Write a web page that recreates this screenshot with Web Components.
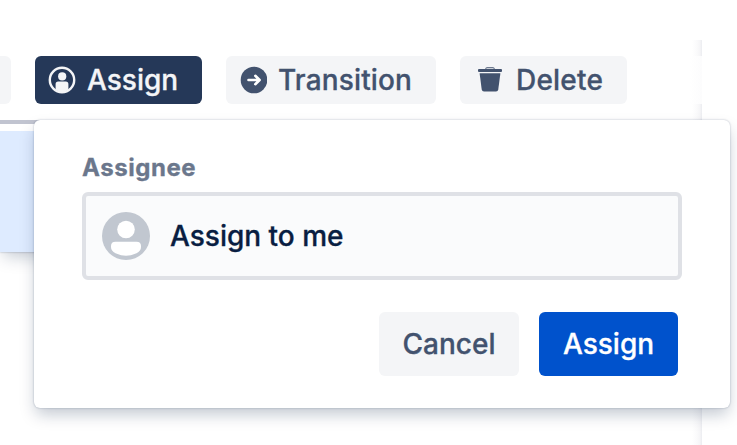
<!DOCTYPE html>
<html lang="en">
<head>
<meta charset="utf-8">
<title>Assign issues</title>
<style>
html, body {
  margin: 0;
  height: 100%;
  overflow: hidden;
  background: #fff;
  font-family: Inter, "Liberation Sans", sans-serif;
  -webkit-text-stroke-width: .3px;
}
</style>
</head>
<body>
<bulk-page>
  <bulk-toolbar slot="toolbar">
    <action-button></action-button>
    <action-button selected icon="person">Assign</action-button>
    <action-button icon="arrow" style="--width: 210px; --spacing: 0.15px">Transition</action-button>
    <action-button icon="trash" style="--spacing: 0.2px">Delete</action-button>
  </bulk-toolbar>
  <issue-row slot="row"></issue-row>
  <assign-popup slot="popup" heading="Assignee">
    <user-field>Assign to me</user-field>
    <form-button slot="footer">Cancel</form-button>
    <form-button slot="footer" primary>Assign</form-button>
  </assign-popup>
</bulk-page>

<script>
const ICONS = {
  person: `
<svg width="28" height="28" viewBox="0 0 28 28">
  <circle cx="14" cy="14" r="12.2" fill="none" stroke="currentColor" stroke-width="2.4"/>
  <circle cx="14.2" cy="10.4" r="4.1" fill="currentColor"/>
  <path d="M7.6 18.2a2.6 2.6 0 0 1 2.6-2.6h7.600a2.600 2.600 0 0 1 2.600 2.600v5.200q-2.800 2.600-6.400 2.600t-6.400-2.600z" fill="currentColor"/>
</svg>`,
  arrow: `
<svg width="28" height="28" viewBox="0 0 28 28">
  <circle cx="15" cy="14" r="13.3" fill="currentColor"/>
  <path d="M9.500 14h10.500M16.300 9.800l4.300 4.200-4.300 4.200" fill="none" stroke="#fff" stroke-width="2.6" stroke-linecap="round" stroke-linejoin="round"/>
</svg>`,
  trash: `
<svg width="28" height="28" viewBox="0 0 28 28">
  <path d="M9 2.800q.5-1.500 2-1.500h6q1.500 0 2 1.500z" fill="currentColor"/>
  <path d="M10.500 2.500h7" stroke="#f4f5f7" stroke-width=".7"/>
  <rect x="2" y="3" width="24" height="2.900" rx="1" fill="currentColor"/>
  <path d="M3.600 7.200h20.800l-2.100 16.100q-.3 2.200-2.300 2.200H8q-2 0-2.300-2.200z" fill="currentColor"/>
</svg>`
};

class BulkPage extends HTMLElement {
  constructor() {
    super();
    const shadowRoot = this.attachShadow({ mode: 'open' });
    shadowRoot.innerHTML = `
<style>
:host {
  display: block;
  position: relative;
  height: 445px;
  overflow: hidden;
}

.panel {
  width: 702px;
  height: 405px;
  margin-top: 40px;
  padding-top: 16px;
  box-sizing: border-box;
  background: linear-gradient(to left, #ebecf0 0, #f5f5f7 2px, #fafafb 5px, #fff 10px);
}

.popup {
  position: absolute;
  left: 34px;
  top: 120px;
}
</style>
<div style="display: flow-root">
  <div class="panel">
    <slot name="toolbar"></slot>
    <slot name="row"></slot>
  </div>
</div>
<div class="popup"><slot name="popup"></slot></div>
`;
  }
}

class BulkToolbar extends HTMLElement {
  constructor() {
    super();
    const shadowRoot = this.attachShadow({ mode: 'open' });
    shadowRoot.innerHTML = `
<style>
:host {
  display: flex;
  gap: 24px;
  height: 48px;
  margin-left: -156px;
  background: linear-gradient(to left, #fcfcfd, #fff 12px);
}
</style>
<slot></slot>
`;
  }
}

class ActionButton extends HTMLElement {
  constructor() {
    super();
    const shadowRoot = this.attachShadow({ mode: 'open' });
    shadowRoot.innerHTML = `
<style>
:host {
  display: flex;
  flex: none;
  align-items: center;
  gap: 11px;
  width: var(--width, 167px);
  height: 48px;
  padding-left: 13px;
  box-sizing: border-box;
  border-radius: 6px;
  background: #f4f5f7;
  color: #42526e;
  font-size: 28px;
  font-weight: 500;
  letter-spacing: var(--spacing, 0);
  white-space: nowrap;
}

:host([selected]) {
  background: #253858;
  color: #f4f5f7;
}

:host([icon="trash"]) {
  padding-left: 16px;
  gap: 12px;
}

svg {
  display: block;
}
</style>
${ICONS[this.getAttribute('icon')] || ''}
<span><slot></slot></span>
`;
  }
}

class IssueRow extends HTMLElement {
  constructor() {
    super();
    const shadowRoot = this.attachShadow({ mode: 'open' });
    shadowRoot.innerHTML = `
<style>
:host {
  display: block;
  width: 60px;
  padding-top: 16px;
}

.line {
  height: 4px;
  background: #c1c4d0;
}

.row {
  height: 121px;
  margin-top: 7px;
  background: #deebff;
  box-shadow: 0 0 2px rgba(9, 30, 66, .31), 0 8px 16px -4px rgba(9, 30, 66, .25);
  clip-path: inset(0 0 -30px 0);
}
</style>
<div class="line"></div>
<div class="row"></div>
`;
  }
}

class AssignPopup extends HTMLElement {
  constructor() {
    super();
    const shadowRoot = this.attachShadow({ mode: 'open' });
    shadowRoot.innerHTML = `
<style>
:host {
  display: flex;
  flex-direction: column;
  width: 696px;
  height: 288px;
  padding: 32px 48px;
  box-sizing: border-box;
  border-radius: 6px;
  background: #fff;
  box-shadow: 0 0 2px rgba(9, 30, 66, .31), 0 8px 16px -2px rgba(9, 30, 66, .25);
}

label {
  height: 32px;
  margin-bottom: 8px;
  color: #6b778c;
  font-size: 24px;
  font-weight: 700;
  line-height: 32px;
  letter-spacing: .55px;
}

footer {
  display: flex;
  justify-content: flex-end;
  gap: 20px;
  margin-top: 32px;
  padding-right: 4px;
}
</style>
<label></label>
<slot></slot>
<footer><slot name="footer"></slot></footer>
`;
    shadowRoot.querySelector('label').textContent = this.getAttribute('heading');
  }
}

class UserField extends HTMLElement {
  constructor() {
    super();
    const shadowRoot = this.attachShadow({ mode: 'open' });
    shadowRoot.innerHTML = `
<style>
:host {
  display: flex;
  align-items: center;
  gap: 20px;
  height: 88px;
  padding-left: 16px;
  box-sizing: border-box;
  border: 4px solid #dfe1e6;
  border-radius: 6px;
  background: #fafbfc;
  color: #091e42;
  font-size: 28px;
  font-weight: 500;
}

svg {
  display: block;
}

span {
  padding-bottom: 1px;
}
</style>
<svg width="48" height="48" viewBox="0 0 48 48">
  <circle cx="24" cy="24" r="24" fill="#c1c7d0"/>
  <circle cx="24" cy="17.5" r="8.8" fill="#fff"/>
  <path d="M9 35v-1q0-4.300 4.500-4.300h21q4.500 0 4.500 4.300v1q0 4-4.500 6.300-4.500 2.400-10.500 2.400t-10.500-2.400q-4.500-2.300-4.500-6.300z" fill="#fff"/>
</svg>
<span><slot></slot></span>
`;
  }
}

class FormButton extends HTMLElement {
  constructor() {
    super();
    const shadowRoot = this.attachShadow({ mode: 'open' });
    shadowRoot.innerHTML = `
<style>
:host {
  display: flex;
  align-items: center;
  justify-content: center;
  width: 140px;
  height: 64px;
  border-radius: 6px;
  background: #f4f5f7;
  color: #42526e;
  font-size: 28px;
  font-weight: 500;
}

:host([primary]) {
  width: 139px;
  background: #0052cc;
  color: #fff;
}
</style>
<slot></slot>
`;
  }
}

customElements.define('bulk-page', BulkPage);
customElements.define('bulk-toolbar', BulkToolbar);
customElements.define('action-button', ActionButton);
customElements.define('issue-row', IssueRow);
customElements.define('assign-popup', AssignPopup);
customElements.define('user-field', UserField);
customElements.define('form-button', FormButton);
</script>
</body>
</html>
